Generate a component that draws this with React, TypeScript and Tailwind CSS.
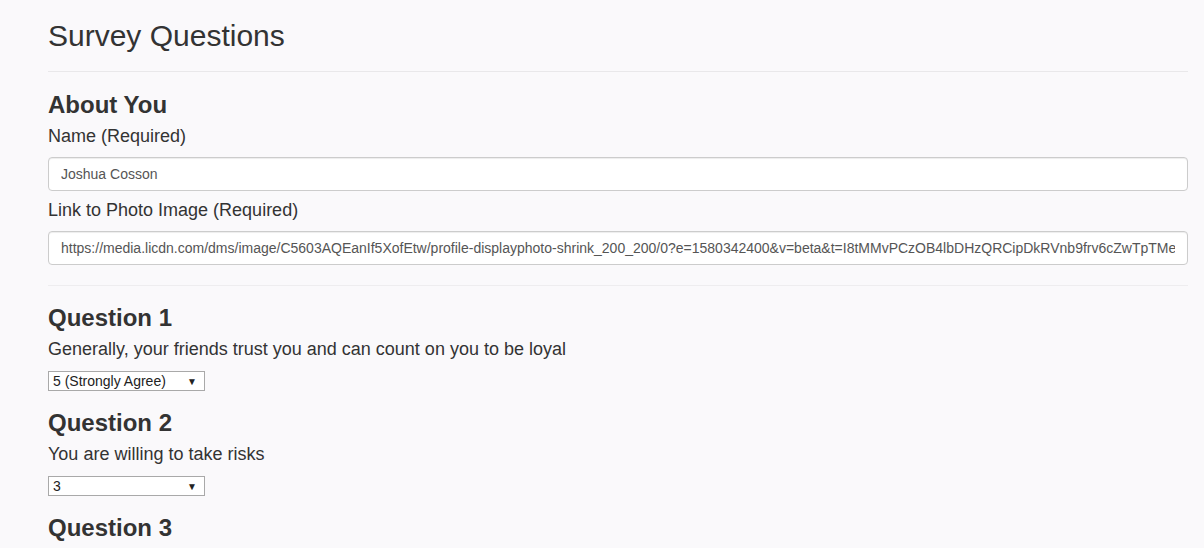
import React from 'react'

const font = { fontFamily: '"Liberation Sans", Arial, sans-serif' }

function Field({ label, value, className = '' }: { label: string; value: string; className?: string }) {
  return (
    <div className={className}>
      <label className="block text-[18px] leading-[26px] text-[#333]">{label}</label>
      <input
        readOnly
        defaultValue={value}
        className="mt-[8px] block w-full h-[34px] px-[12px] bg-white border border-[#ccc] rounded-[4px] text-[14px] text-[#555] shadow-[inset_0_1px_1px_rgba(0,0,0,0.075)] outline-none"
        style={font}
      />
    </div>
  )
}

function Question({ n, text, value, options }: { n: number; text?: string; value?: string; options?: string[] }) {
  return (
    <div>
      <h3 className="text-[24px] leading-[26px] font-bold text-[#333]">Question {n}</h3>
      {text && <p className="mt-[5px] text-[18px] leading-[26px] text-[#333]">{text}</p>}
      {options && (
        <div className="relative mt-[9px] w-[157px] h-[20px]">
          <select
            defaultValue={value}
            className="appearance-none block w-full h-full pl-[4px] pr-[20px] bg-white border border-[#a9a9a9] text-[14px] leading-[18px] text-[#222] outline-none"
            style={font}
          >
            {options.map(o => (
              <option key={o} value={o}>{o}</option>
            ))}
          </select>
          <span className="pointer-events-none absolute right-[8px] top-[3px] text-[10px] text-[#222]">▼</span>
        </div>
      )}
    </div>
  )
}

const scale = ['1 (Strongly Disagree)', '2', '3', '4', '5 (Strongly Agree)']

export default function App() {
  return (
    <div className="h-[548px] overflow-hidden bg-[#faf9fb] px-[48px]" style={font}>
      <div className="w-[1140px]">
        <h2 className="pt-[19px] text-[30px] leading-[33px] text-[#333]">Survey Questions</h2>
        <hr className="mt-[19px] border-0 border-t border-[#e9e8ea]" />

        <h3 className="mt-[20px] text-[24px] leading-[26px] font-bold text-[#333]">About You</h3>
        <Field className="mt-[5px]" label="Name (Required)" value="Joshua Cosson" />
        <Field
          className="mt-[6px]"
          label="Link to Photo Image (Required)"
          value="https://media.licdn.com/dms/image/C5603AQEanIf5XofEtw/profile-displayphoto-shrink_200_200/0?e=1580342400&v=beta&t=I8tMMvPCzOB4lbDHzQRCipDkRVnb9frv6cZwTpTMe"
        />
        <hr className="mt-[20px] border-0 border-t border-[#eeedef]" />

        <div className="mt-[19px] flex flex-col gap-[19px]">
          <Question n={1} text="Generally, your friends trust you and can count on you to be loyal" value="5 (Strongly Agree)" options={scale} />
          <Question n={2} text="You are willing to take risks" value="3" options={scale} />
          <Question n={3} />
        </div>
      </div>
    </div>
  )
}
